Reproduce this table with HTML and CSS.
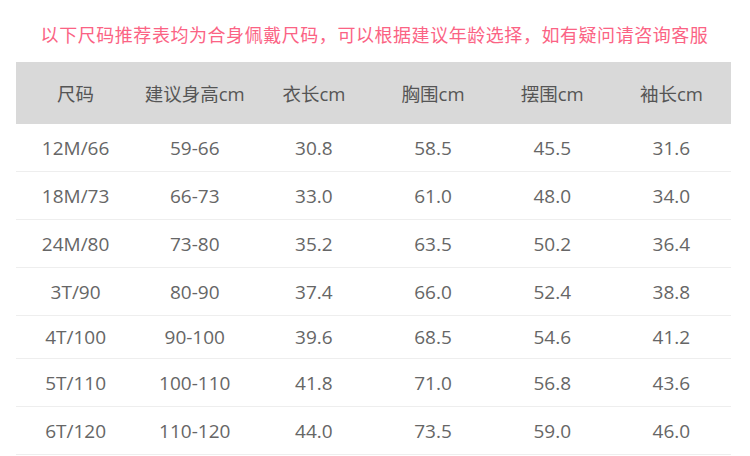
FILE: index.html
```html
<!DOCTYPE html>
<html lang="zh-CN">
<head>
<meta charset="utf-8">
<link rel="stylesheet" href="styles.css">
</head>
<body>
<div class="page">
  <p class="notice">以下尺码推荐表均为合身佩戴尺码，可以根据建议年龄选择，如有疑问请咨询客服</p>
  <table class="size-table">
    <thead>
      <tr><th>尺码</th><th>建议身高cm</th><th>衣长cm</th><th>胸围cm</th><th>摆围cm</th><th>袖长cm</th></tr>
    </thead>
    <tbody>
      <tr><td>12M/66</td><td>59-66</td><td>30.8</td><td>58.5</td><td>45.5</td><td>31.6</td></tr>
      <tr><td>18M/73</td><td>66-73</td><td>33.0</td><td>61.0</td><td>48.0</td><td>34.0</td></tr>
      <tr><td>24M/80</td><td>73-80</td><td>35.2</td><td>63.5</td><td>50.2</td><td>36.4</td></tr>
      <tr><td>3T/90</td><td>80-90</td><td>37.4</td><td>66.0</td><td>52.4</td><td>38.8</td></tr>
      <tr class="short"><td>4T/100</td><td>90-100</td><td>39.6</td><td>68.5</td><td>54.6</td><td>41.2</td></tr>
      <tr><td>5T/110</td><td>100-110</td><td>41.8</td><td>71.0</td><td>56.8</td><td>43.6</td></tr>
      <tr><td>6T/120</td><td>110-120</td><td>44.0</td><td>73.5</td><td>59.0</td><td>46.0</td></tr>
    </tbody>
  </table>
</div>
</body>
</html>
```

FILE: styles.css
```css
html, body {
  margin: 0;
  padding: 0;
  background: #ffffff;
}

body {
  font-family: "Open Sans", "Noto Sans CJK SC", sans-serif;
  color: #5a5a5a;
}

.page {
  width: 715px;
  padding: 0 19px 0 16px;
}

.notice {
  margin: 0;
  height: 62px;
  line-height: 68px;
  text-align: center;
  font-family: "Noto Sans CJK SC", sans-serif;
  font-size: 18px;
  letter-spacing: 0.55px;
  color: #fb6384;
  white-space: nowrap;
  padding-left: 2px;
}

.size-table {
  width: 715px;
  border-collapse: collapse;
  table-layout: fixed;
}

.size-table th {
  height: 62px;
  padding: 0;
  background: #d9d9d9;
  font-weight: normal;
  font-size: 18.5px;
  color: #555555;
  text-align: center;
}

.size-table td {
  height: 47px;
  padding: 0;
  font-size: 19px;
  color: #666666;
  text-align: center;
  border-bottom: 1px solid #eeeeee;
}

.size-table tr.short td {
  height: 42px;
}
```
